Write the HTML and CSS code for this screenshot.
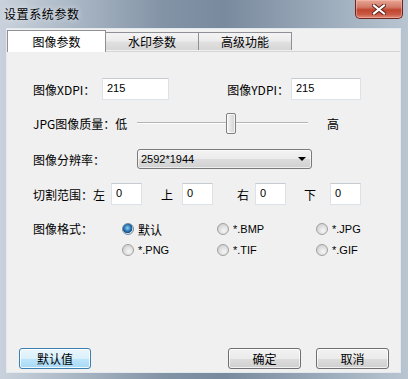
FILE: index.html
```html
<!DOCTYPE html>
<html lang="zh-CN">
<head>
    <meta charset="UTF-8">
    <meta name="viewport" content="width=device-width, initial-scale=1.0">
    <title>设置系统参数</title>
    <link rel="stylesheet" href="styles.css">
</head>
<body>
    <div class="window">
        <div class="titlebar">
            <span class="title">设置系统参数</span>
            <button class="close" aria-label="关闭">
                <svg width="14" height="11" viewBox="0 0 14 11">
                    <path d="M2 1.5 L12 9.5 M12 1.5 L2 9.5" stroke="#5a1c16" stroke-width="4" stroke-linecap="square"/>
                    <path d="M2 1.5 L12 9.5 M12 1.5 L2 9.5" stroke="#fff" stroke-width="2.2" stroke-linecap="square"/>
                </svg>
            </button>
        </div>

        <div class="client">
            <div class="tabs">
                <div class="tab active">图像参数</div>
                <div class="tab">水印参数</div>
                <div class="tab">高级功能</div>
            </div>

            <div class="panel">
                <div class="row dpi-row">
                    <span class="lbl dpi-lbl">图像XDPI：</span>
                    <input class="text dpi" type="text" value="215">
                    <span class="lbl ydpi-lbl">图像YDPI：</span>
                    <input class="text dpi" type="text" value="215">
                </div>

                <div class="row quality-row">
                    <span class="lbl wide-lbl">JPG图像质量：低</span>
                    <div class="slider">
                        <span class="thumb"></span>
                    </div>
                    <span class="lbl high">高</span>
                </div>

                <div class="row res-row">
                    <span class="lbl wide-lbl">图像分辨率：</span>
                    <div class="combo">
                        <span>2592*1944</span>
                        <span class="arrow"></span>
                    </div>
                </div>

                <div class="row cut-row">
                    <span class="lbl cut-lbl">切割范围：左</span>
                    <input class="text cut" type="text" value="0">
                    <span class="lbl side side-top">上</span>
                    <input class="text cut" type="text" value="0">
                    <span class="lbl side side-right">右</span>
                    <input class="text cut" type="text" value="0">
                    <span class="lbl side side-bottom">下</span>
                    <input class="text cut" type="text" value="0">
                </div>

                <div class="row format-row">
                    <span class="lbl format-lbl">图像格式：</span>
                    <div class="radios">
                        <label class="radio checked"><span class="dot"></span><span class="cjk">默认</span></label>
                        <label class="radio"><span class="dot"></span>*.BMP</label>
                        <label class="radio"><span class="dot"></span>*.JPG</label>
                        <label class="radio"><span class="dot"></span>*.PNG</label>
                        <label class="radio"><span class="dot"></span>*.TIF</label>
                        <label class="radio"><span class="dot"></span>*.GIF</label>
                    </div>
                </div>
            </div>

            <div class="footer">
                <button class="btn btn-focus">默认值</button>
                <button class="btn ok">确定</button>
                <button class="btn">取消</button>
            </div>
        </div>
    </div>
</body>
</html>
```

FILE: styles.css
```css
body {
    margin: 0;
    width: 408px;
    height: 379px;
    overflow: hidden;
    font-family: "Noto Sans CJK SC", "Liberation Sans", sans-serif;
    font-size: 12px;
    color: #000;
}
.window {
    width: 408px;
    height: 379px;
    display: flex;
    flex-direction: column;
    background: linear-gradient(90deg, #c9d2dc 0%, #aab7c5 18%, #8393a6 40%, #7a8a9e 55%, #95a5b6 75%, #b9c5d1 100%);
}
.titlebar {
    height: 28px;
    display: flex;
    align-items: flex-start;
    flex-shrink: 0;
}
.title {
    padding: 6px 0 0 4px;
    letter-spacing: 0.6px;
    line-height: 16px;
    text-shadow: 0 0 6px rgba(255,255,255,0.8);
}
.close {
    margin-left: auto;
    margin-right: 5px;
    width: 48px;
    height: 19px;
    padding: 0;
    border: 1px solid #6b2620;
    border-top: none;
    border-radius: 0 0 5px 5px;
    background: linear-gradient(#e9a594, #d17a67 40%, #c0452f 55%, #c95a44 80%, #e08a78);
    box-shadow: inset 0 0 0 1px rgba(255,200,190,0.45);
    display: flex;
    align-items: center;
    justify-content: center;
}

.client {
    flex: 1;
    margin: 0 7px 6px 6px;
    border: 1px solid #e4e9ee;
    background: #f0f0f0;
    display: flex;
    flex-direction: column;
}
.tabs {
    display: flex;
    align-items: flex-end;
    height: 22px;
    padding-top: 2px;
    box-sizing: border-box;
}
.tab {
    width: 94px;
    height: 18px;
    margin-bottom: 1px;
    border: 1px solid #8e9096;
    border-bottom: none;
    margin-left: -1px;
    box-sizing: border-box;
    background: linear-gradient(#f4f4f4, #ececec 45%, #e0e0e0 55%, #d6d6d6);
    text-align: center;
    line-height: 18px;
}
.tab.active {
    width: 99px;
    height: 22px;
    margin-left: 0;
    margin-bottom: -1px;
    background: #fff;
    line-height: 21px;
    position: relative;
    z-index: 1;
}
.panel {
    flex: 1;
    border-top: 1px solid #d4d4d4;
    padding: 26px 39px 0 26px;
}

.row {
    display: flex;
    align-items: center;
}
.lbl {
    white-space: nowrap;
}
.text {
    height: 22px;
    box-sizing: border-box;
    border: 1px solid #dde2e8;
    border-top-color: #c6cbd2;
    background: #fff;
    padding: 3px 4px 5px;
    font-family: "Liberation Sans", sans-serif;
    font-size: 11px;
    outline: none;
}

.dpi-row { height: 22px; }
.dpi-lbl { width: 69px; }
.dpi { width: 67px; }
.dpi-row .dpi:last-child { width: 70px; }
.ydpi-lbl { margin-left: auto; margin-right: 2px; }

.quality-row {
    height: 22px;
    margin-top: 12px;
}
.wide-lbl { width: 104px; }
.slider {
    width: 171px;
    height: 22px;
    display: flex;
    align-items: center;
    background:
        linear-gradient(#b4b4b4, #b4b4b4) no-repeat 0 10px / 100% 1px,
        linear-gradient(#ffffff, #ffffff) no-repeat 0 11px / 100% 1px;
}
.thumb {
    width: 10px;
    height: 21px;
    margin-left: 89px;
    box-sizing: border-box;
    border: 1px solid #808080;
    border-radius: 2px;
    background: linear-gradient(90deg, #f6f6f6, #e2e2e2 50%, #d4d4d4);
    box-shadow: inset 0 0 0 1px rgba(255,255,255,0.7);
}
.high { margin-left: 19px; }

.res-row {
    height: 20px;
    margin-top: 15px;
}
.combo {
    width: 175px;
    height: 20px;
    box-sizing: border-box;
    border: 1px solid #7a7a7a;
    border-radius: 3px;
    background: linear-gradient(#f3f3f3, #ebebeb 50%, #dddddd 50%, #d0d0d0);
    box-shadow: inset 0 0 0 1px rgba(255,255,255,0.6);
    display: flex;
    align-items: center;
    padding: 0 5px 0 3px;
    font-family: "Liberation Sans", sans-serif;
    font-size: 11px;
}
.arrow {
    margin-left: auto;
    width: 0;
    height: 0;
    border-left: 4px solid transparent;
    border-right: 4px solid transparent;
    border-top: 4px solid #000;
}

.cut-row {
    height: 22px;
    margin-top: 14px;
}
.cut-lbl { width: 80px; }
.cut { width: 31px; }
.side-top { margin: 0 9px 0 19px; }
.side-right { margin: 0 6px 0 24px; }
.side-bottom { margin: 0 14px 0 18px; }

.format-row {
    align-items: flex-start;
    margin-top: 14px;
}
.format-lbl {
    width: 89px;
    line-height: 20px;
}
.radios {
    display: grid;
    grid-template-columns: 95px 99px auto;
    grid-auto-rows: 20px;
    row-gap: 1px;
}
.radio {
    display: flex;
    align-items: center;
    font-family: "Liberation Sans", sans-serif;
    font-size: 11px;
}
.radio .cjk {
    font-family: "Noto Sans CJK SC", sans-serif;
    font-size: 12px;
}
.dot {
    width: 12px;
    height: 12px;
    box-sizing: border-box;
    border-radius: 50%;
    border: 1px solid #a0a0a0;
    background: radial-gradient(circle at 60% 65%, #f6f6f6 0, #dcdcdc 55%, #c4c4c4 100%);
    margin-right: 4px;
}
.radio.checked .dot {
    border-color: #6e8aa4;
    background: radial-gradient(circle at 45% 40%, #8fd3f4 0, #2a76b4 40%, #17507e 60%, #d8dde2 62%, #eef0f2 100%);
}

.footer {
    display: flex;
    padding: 0 11px 3px 12px;
}
.btn {
    width: 73px;
    height: 21px;
    padding: 0;
    border: 1px solid #707070;
    border-radius: 3px;
    background: linear-gradient(#f2f2f2, #ebebeb 50%, #dddddd 50%, #cfcfcf);
    box-shadow: inset 0 0 0 1px rgba(255,255,255,0.7);
    font-family: "Noto Sans CJK SC", sans-serif;
    font-size: 12px;
    color: #000;
}
.btn-focus {
    width: 72px;
    border-color: #3c7fb1;
    background: linear-gradient(#eaf6fd, #d9f0fc 50%, #bee6fd 50%, #a7d9f5);
    box-shadow: inset 0 0 0 1px rgba(255,255,255,0.8);
}
.ok {
    margin-left: auto;
    margin-right: 15px;
}
```
